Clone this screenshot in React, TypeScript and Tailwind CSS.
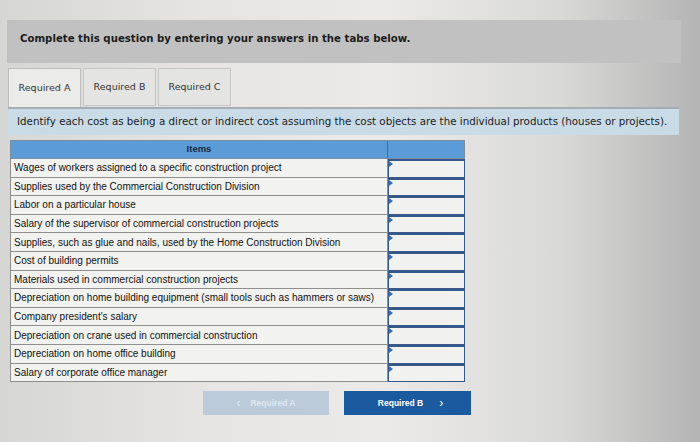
const items = [
  'Wages of workers assigned to a specific construction project',
  'Supplies used by the Commercial Construction Division',
  'Labor on a particular house',
  'Salary of the supervisor of commercial construction projects',
  'Supplies, such as glue and nails, used by the Home Construction Division',
  'Cost of building permits',
  'Materials used in commercial construction projects',
  'Depreciation on home building equipment (small tools such as hammers or saws)',
  "Company president's salary",
  'Depreciation on crane used in commercial construction',
  'Depreciation on home office building',
  'Salary of corporate office manager',
];

const tabs = ['Required A', 'Required B', 'Required C'];

function AnswerCell() {
  // dropdown-style answer box with the little blue marker in the corner
  return (
    <div className="relative h-full w-full border border-t-2 border-[#35598a] bg-[#f1f1ef]">
      <span className="absolute left-0 top-0 h-0 w-0 border-y-[3px] border-l-[4px] border-y-transparent border-l-[#2f6fc0]" />
    </div>
  );
}

export default function App() {
  return (
    <div className="h-[442px] w-[700px] overflow-hidden bg-[linear-gradient(90deg,#d6d6d4_0%,#e6e5e3_30%,#ebeae8_55%,#d9d9d8_80%,#b4b4b4_100%)] font-['DejaVu_Sans',sans-serif]">
      <div className="pt-[20px]">
        {/* Header band */}
        <div className="ml-[7px] flex h-[43px] w-[674px] items-center bg-[#c1c1c1] pb-[6px] pl-[13px] text-[10.2px] font-bold text-[#1c1c1c]">
          Complete this question by entering your answers in the tabs below.
        </div>

        {/* Tabs */}
        <div className="ml-[8px] mt-[5px] flex gap-[2px]">
          {tabs.map((t, i) => (
            <div
              key={t}
              className={
                i === 0
                  ? 'flex h-[39px] w-[73px] items-center justify-center border border-b-0 border-[#bdbdbd] bg-[#ebebea] text-[9.5px] text-[#333]'
                  : 'flex h-[38px] w-[73px] items-center justify-center border border-[#c6c6c6] bg-[#e4e4e3] text-[9.5px] text-[#333]'
              }
            >
              {t}
            </div>
          ))}
        </div>

        {/* Instruction band */}
        <div className="ml-[8px] flex h-[28px] w-[671px] items-center border-t-2 border-[#a4adb4] bg-[#c8dbe6] pl-[9px] text-[10.3px] text-[#222]">
          Identify each cost as being a direct or indirect cost assuming the cost objects are the individual products (houses or projects).
        </div>

        {/* Table */}
        <div className="ml-[10px] mt-[5px] w-[455px] font-['Liberation_Sans',Arial,sans-serif]">
          <div className="flex h-[19px] border border-[#7d8da0] bg-[#5a9bd8]">
            <div className="flex w-[377px] items-center justify-center border-r border-[#3f6f9f] text-[9.5px] font-bold text-[#1d2b3c]">
              Items
            </div>
            <div className="flex-1" />
          </div>
          {items.map(item => (
            <div key={item} className="flex h-[18.6px]">
              <div className="flex w-[378px] items-center overflow-hidden whitespace-nowrap border-b border-l border-r border-[#8f8f8f] bg-[#f2f2f0] pl-[3px] text-[10px] text-[#111]">
                {item}
              </div>
              <div className="flex-1">
                <AnswerCell />
              </div>
            </div>
          ))}
        </div>

        {/* Navigation buttons */}
        <div className="ml-[203px] mt-[9px] flex gap-[15px] font-['Liberation_Sans',Arial,sans-serif]">
          <div className="flex h-[24px] w-[126px] items-center justify-center gap-[10px] bg-[#bccbd9] text-[8.5px] font-bold text-[#dde6ee]">
            <span className="text-[12px] font-normal">‹</span>
            Required A
          </div>
          <div className="flex h-[24px] w-[127px] items-center justify-center gap-[16px] bg-[#1c5aa0] pl-[6px] text-[8.5px] font-bold text-white">
            Required B
            <span className="text-[12px] font-normal">›</span>
          </div>
        </div>
      </div>
    </div>
  );
}
